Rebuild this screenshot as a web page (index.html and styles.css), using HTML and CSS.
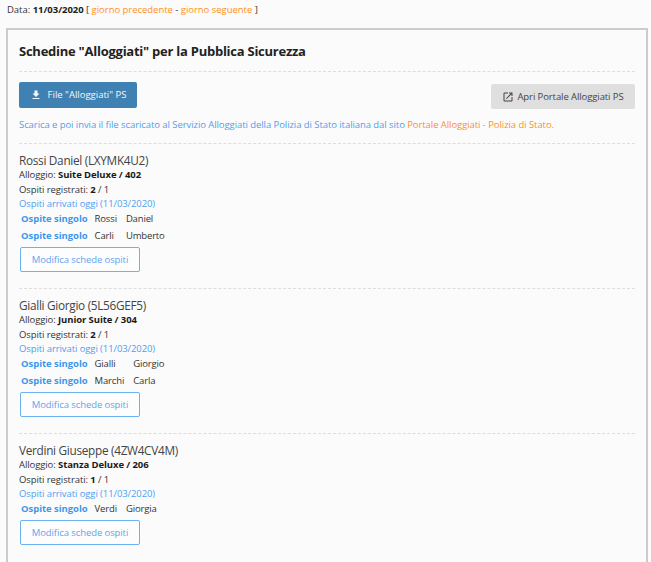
FILE: index.html
```html
<!DOCTYPE html>
<html lang="it">
<head>
<meta charset="utf-8">
<title>Schedine Alloggiati</title>
<link rel="stylesheet" href="styles.css">
</head>
<body>
<p class="date-line">Data: <b>11/03/2020</b> [ <a class="orange">giorno precedente</a> - <a class="orange">giorno seguente</a> ]</p>
<main class="panel">
  <h1 class="title">Schedine "Alloggiati" per la Pubblica Sicurezza</h1>
  <div class="actions">
    <a class="btn btn-primary"><svg class="icon" viewBox="0 0 24 24"><path fill="currentColor" d="M19 9h-4V3H9v6H5l7 7 7-7zM5 18v2h14v-2H5z"/></svg>File "Alloggiati" PS</a>
    <a class="btn btn-grey"><svg class="icon" viewBox="0 0 24 24"><path fill="currentColor" d="M19 19H5V5h7V3H5a2 2 0 0 0-2 2v14a2 2 0 0 0 2 2h14a2 2 0 0 0 2-2v-7h-2v7zM14 3v2h3.59l-9.83 9.83 1.41 1.41L19 6.41V10h2V3h-7z"/></svg>Apri Portale Alloggiati PS</a>
  </div>
  <p class="info">Scarica e poi invia il file scaricato al Servizio Alloggiati della Polizia di Stato italiana dal sito <a class="orange">Portale Alloggiati - Polizia di Stato.</a></p>

  <section class="booking">
    <h2 class="name">Rossi Daniel (LXYMK4U2)</h2>
    <div class="line">Alloggio: <b>Suite Deluxe / 402</b></div>
    <div class="line reg">Ospiti registrati: <b>2</b> / 1</div>
    <div class="line arrivals">Ospiti arrivati oggi (11/03/2020)</div>
    <table class="guests">
      <tr><th>Ospite singolo</th><td>Rossi</td><td>Daniel</td></tr>
      <tr><th>Ospite singolo</th><td>Carli</td><td>Umberto</td></tr>
    </table>
    <a class="btn btn-outline">Modifica schede ospiti</a>
  </section>

  <section class="booking">
    <h2 class="name">Gialli Giorgio (5L56GEF5)</h2>
    <div class="line">Alloggio: <b>Junior Suite / 304</b></div>
    <div class="line reg">Ospiti registrati: <b>2</b> / 1</div>
    <div class="line arrivals">Ospiti arrivati oggi (11/03/2020)</div>
    <table class="guests">
      <tr><th>Ospite singolo</th><td>Gialli</td><td>Giorgio</td></tr>
      <tr><th>Ospite singolo</th><td>Marchi</td><td>Carla</td></tr>
    </table>
    <a class="btn btn-outline">Modifica schede ospiti</a>
  </section>

  <section class="booking">
    <h2 class="name">Verdini Giuseppe (4ZW4CV4M)</h2>
    <div class="line">Alloggio: <b>Stanza Deluxe / 206</b></div>
    <div class="line reg">Ospiti registrati: <b>1</b> / 1</div>
    <div class="line arrivals">Ospiti arrivati oggi (11/03/2020)</div>
    <table class="guests">
      <tr><th>Ospite singolo</th><td>Verdi</td><td>Giorgia</td></tr>
    </table>
    <a class="btn btn-outline">Modifica schede ospiti</a>
  </section>
</main>
</body>
</html>
```
FILE: styles.css
```css
html, body { margin: 0; height: 562px; overflow: hidden; }
body {
  background: #fbfbfb;
  color: #333;
  font-family: "Open Sans", "Noto Sans", sans-serif;
  font-size: 9.5px;
  line-height: 14px;
  letter-spacing: -0.09px;
}
b { color: #1a1a1a; }
.orange { color: #ff9026; }
.date-line { margin: 0; padding: 3px 0 0 7px; height: 28px; box-sizing: border-box; letter-spacing: -0.03px; }
.panel {
  margin: 0 3px 0 6px;
  border: 2px solid #ccc;
  border-bottom: 0;
  padding: 0 11px;
  height: 600px;
}
.title {
  margin: 0;
  height: 42px;
  padding-top: 12px;
  box-sizing: border-box;
  border-bottom: 1px dashed #ddd;
  font-size: 13px;
  letter-spacing: -0.25px;
  line-height: 18px;
  font-weight: 700;
  color: #222;
}
.actions { display: flex; justify-content: space-between; align-items: flex-start; height: 38px; padding-top: 10px; box-sizing: border-box; }
.btn { display: inline-flex; align-items: center; justify-content: center; box-sizing: border-box; border-radius: 2px; }
.icon { width: 12px; height: 12px; }
.btn-primary { width: 118px; height: 26px; background: #3f81b3; color: #f2f7fa; letter-spacing: 0; }
.btn-primary .icon { margin-right: 6px; }
.btn-grey { width: 144px; height: 25px; margin-top: 2px; background: #dfdfdf; color: #444; }
.btn-grey .icon { margin-right: 3px; }
.info { margin: 0; padding-top: 8px; height: 34px; box-sizing: border-box; color: #4f9fee; border-bottom: 1px dashed #ddd; letter-spacing: -0.07px; }
.booking { height: 145px; box-sizing: border-box; padding-top: 9px; border-bottom: 1px dashed #ddd; }
.name { margin: 0; font-size: 11.8px; letter-spacing: -0.3px; line-height: 15px; font-weight: 400; color: #444; }
.line { line-height: 14px; }
.reg { margin-top: 1px; }
.arrivals { color: #4f9fee; }
.guests { border-collapse: collapse; margin: 0 0 0 2px; }
.guests th { padding: 1px 7px 2px 0; text-align: left; color: #3d97ea; font-weight: 700; line-height: 14px; letter-spacing: -0.05px; }
.guests td { padding: 1px 9px 2px 0; line-height: 14px; letter-spacing: -0.15px; }
.btn-outline { width: 120px; height: 25px; margin: 2px 0 0 1px; border: 1px solid #6ab2f2; color: #62a4ec; background: #fdfdfd; }
```
